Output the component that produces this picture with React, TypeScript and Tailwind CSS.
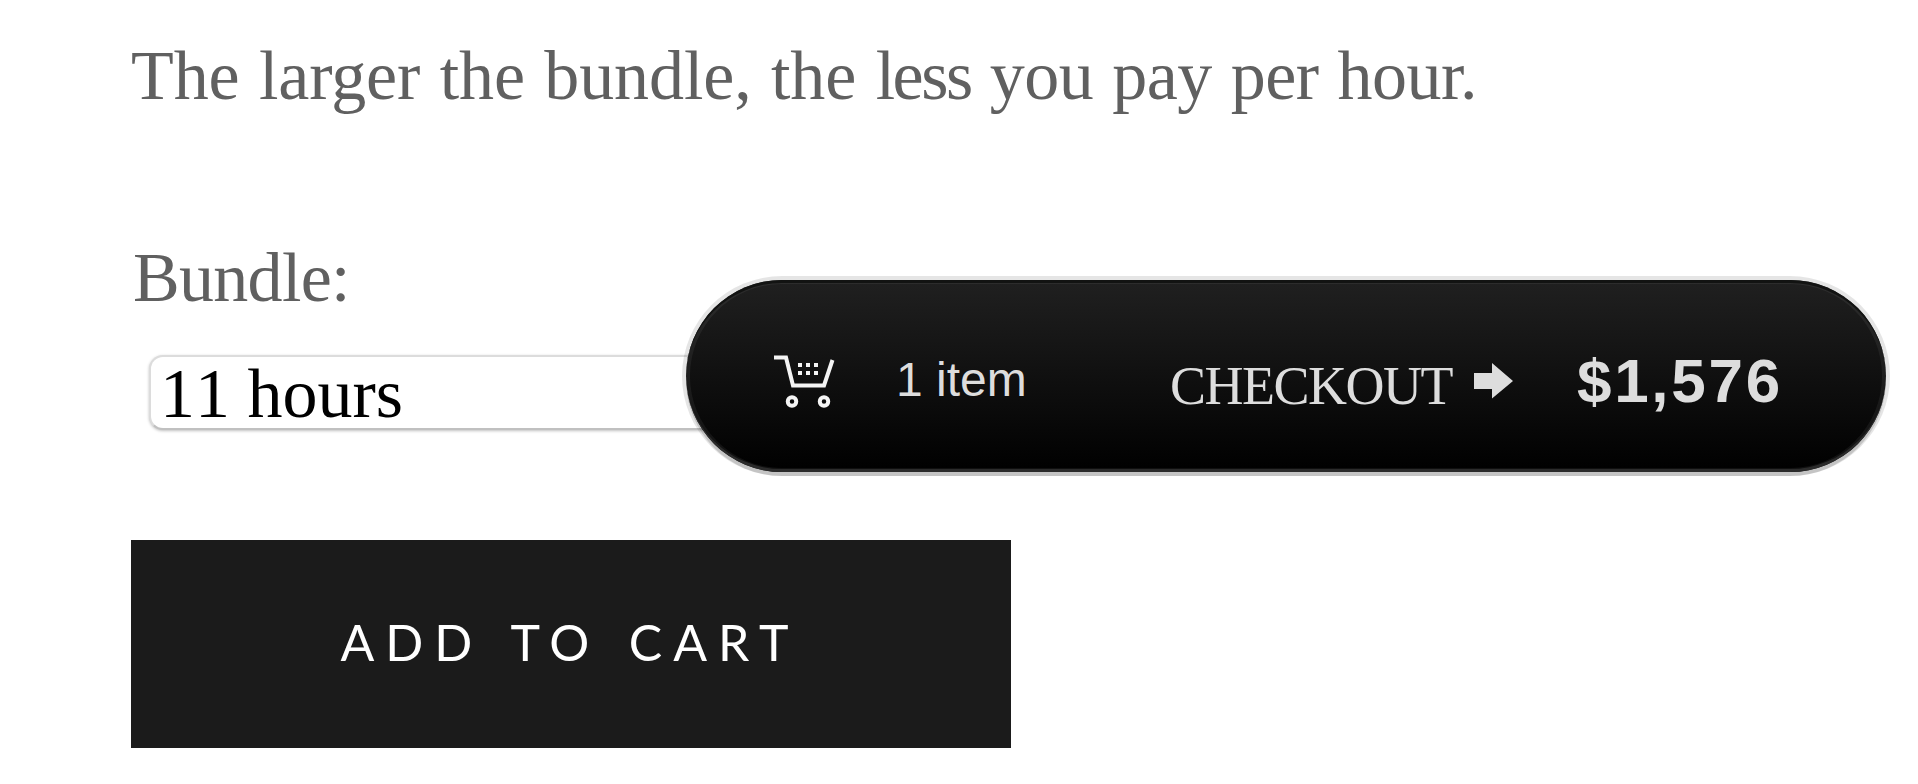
type CartSummaryProps = {
  label: string
  total: string
}

function CartIcon() {
  return (
    <svg width="62" height="56" viewBox="0 0 62 56" fill="none" aria-hidden="true">
      <path d="M1 3.500h12l7 28h31l8.500-25.500" stroke="#f4f4f4" strokeWidth="4" />
      <path
        d="M25 9h4v4h-4zM33 9h4v4h-4zM41 9h4v4h-4zM25 17h4v4h-4zM33 17h4v4h-4zM41 17h4v4h-4z"
        fill="#f4f4f4"
      />
      <circle cx="19" cy="47.500" r="4.250" stroke="#f4f4f4" strokeWidth="4" />
      <circle cx="51" cy="47.500" r="4.250" stroke="#f4f4f4" strokeWidth="4" />
    </svg>
  )
}

function CartSummary({ label, total }: Readonly<CartSummaryProps>) {
  return (
    <a
      href="#checkout"
      className="absolute left-[686px] top-[280px] flex h-[192px] w-[1200px] items-start rounded-full bg-linear-to-b/srgb from-[#202020] to-black pl-[87px] text-[#dddddd] shadow-[inset_0_4px_0_-1px_#121312,inset_0_-4px_0_-1px_#2b2b2b,inset_0_0_0_4px_rgba(255,255,255,0.06),0_0_0_4px_rgba(0,0,0,0.1),0_4px_0_rgba(0,0,0,0.14)]"
    >
      <span className="mt-[74px] w-[62px] shrink-0">
        <CartIcon />
      </span>
      <span className='ml-[61px] mt-[72px] w-[274px] shrink-0 whitespace-nowrap font-["Liberation_Sans",sans-serif] text-[48px] leading-[56px]'>
        {label}
      </span>
      <span className='mt-[76px] w-[304px] shrink-0 whitespace-nowrap font-["Liberation_Serif",serif] text-[54px] leading-[60px] tracking-[-1.500px]'>
        CHECKOUT
      </span>
      <svg width="40" height="36" viewBox="0 0 40 36" className="mt-[83px] shrink-0" aria-hidden="true">
        <path d="M0 10h18V0l21 18-21 17.500V26H0z" fill="#dddddd" />
      </svg>
      <span className='ml-[63px] mt-[66px] whitespace-nowrap font-["Liberation_Sans",sans-serif] text-[62px] font-bold leading-[70px] tracking-[2.700px] [font-kerning:none]'>
        {total}
      </span>
    </a>
  )
}

export default function App() {
  return (
    <main className='relative h-[784px] w-[1918px] overflow-hidden bg-white pl-[131px] font-["Liberation_Serif",serif] text-[70px] text-[#606060]'>
      <p className="h-[202px] whitespace-nowrap pt-[36px] leading-[80px] tracking-[-0.500px] [word-spacing:2px]">
        <span className="tracking-[-0.100px]">The larger the bundle, the </span>
        <span className="tracking-[-2.500px]">less</span> you pay per hour.
      </p>

      <div className="flex h-[338px] flex-col">
        <label htmlFor="bundle" className="pl-[2px] pt-[36px] leading-[80px] tracking-[-0.700px]">
          Bundle:
        </label>
        <button
          id="bundle"
          type="button"
          className="ml-[18px] mt-[37px] h-[75px] w-[700px] whitespace-nowrap rounded-[14px] border-2 border-[#dcdcdc] border-b-[#c0c0c0] bg-white pl-[9px] text-left leading-[74px] text-black shadow-[0_1px_3px_rgba(0,0,0,0.25)] [font-kerning:none]"
        >
          11 hours
        </button>
      </div>

      <button
        type="button"
        className="flex h-[208px] w-[880px] items-center justify-center bg-[#1b1b1b] pb-[3px] pr-[2px] font-[Lato,sans-serif] text-[50px] tracking-[10.900px] text-white [word-spacing:5px]"
      >
        ADD TO CART
      </button>

      <CartSummary label="1 item" total="$1,576" />
    </main>
  )
}
